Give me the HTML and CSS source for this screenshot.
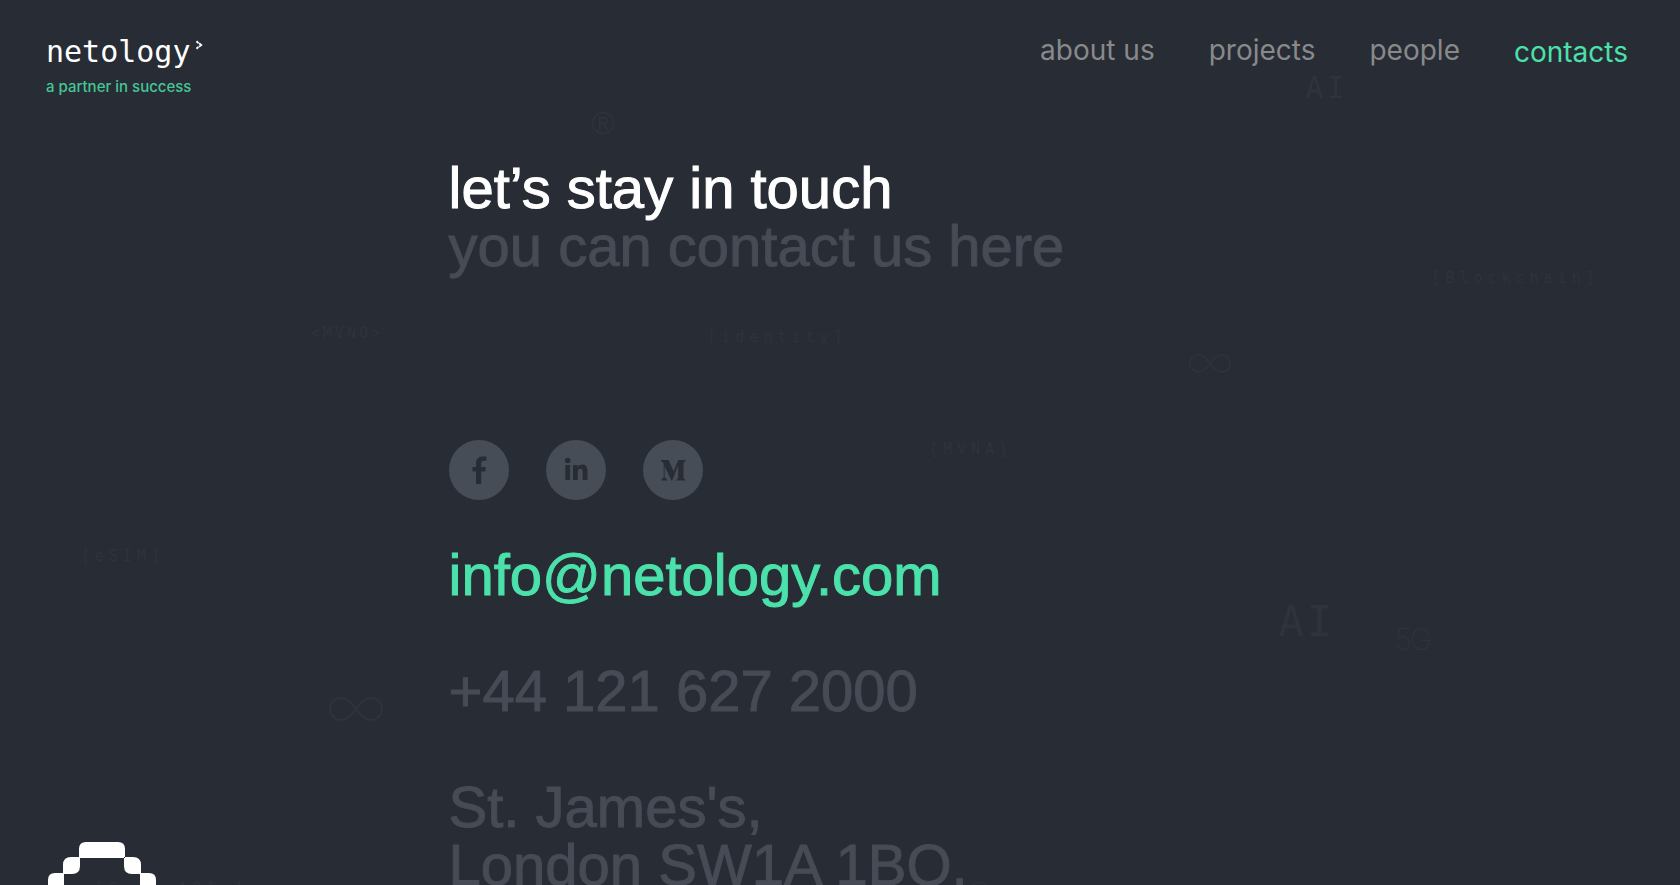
FILE: index.html
```html
<!DOCTYPE html>
<html lang="en">

<head>
    <meta charset="UTF-8">
    <meta name="viewport" content="width=device-width, initial-scale=1.0">
    <title>netology - contacts</title>
    <link rel="stylesheet" href="styles.css">
</head>

<body>

    <!-- floating background words -->
    <div class="words" aria-hidden="true">
        <span class="word reg">®</span>
        <span class="word ai-top">AI</span>
        <span class="word blockchain">[Blockchain]</span>
        <span class="word mvno">&lt;MVNO&gt;</span>
        <span class="word identity">[identity]</span>
        <span class="word mvna">{MVNA}</span>
        <span class="word esim">[eSIM]</span>
        <span class="word ai-bottom">AI</span>
        <span class="word five-g">5G</span>
        <span class="word apis">[Core APIs]</span>
        <span class="word reg-bottom">®</span>
        <svg class="word loop-small" viewBox="0 0 54 24"><path d="M27 12C22 5 18 1 12 1a11 11 0 0 0 0 22c6 0 10-4 15-11s9-11 15-11a11 11 0 0 1 0 22c-6 0-10-4-15-11z"/></svg>
        <svg class="word loop-big" viewBox="0 0 54 24"><path d="M27 12C22 5 18 1 12 1a11 11 0 0 0 0 22c6 0 10-4 15-11s9-11 15-11a11 11 0 0 1 0 22c-6 0-10-4-15-11z"/></svg>
    </div>

    <header class="header">
        <a class="logo" href="#">
            <span class="logo-name">netology<svg class="logo-arrow" viewBox="0 0 6 8"><path d="M1 1l1.500 1.500M1 7l1.500-1.500M3 2.500L4.800 4L3 5.500"/></svg></span>
            <span class="logo-text">a partner in success</span>
        </a>
        <nav class="menu">
            <a href="#">about us</a>
            <a href="#">projects</a>
            <a href="#">people</a>
            <a class="active" href="#">contacts</a>
        </nav>
    </header>

    <main class="contacts">
        <h1>let’s stay in touch<br><span>you can contact us here</span></h1>

        <div class="social">
            <a href="#" aria-label="Facebook">
                <svg viewBox="0 0 60 60"><path d="M27 44V31.500h-3.500V27H27v-3.500c0-4.500 2.500-7 6.500-7H37.500v4.300h-2.500c-2 0-2.800 1-2.800 2.700V27h4.800l-.7 4.500h-4.100V44z"/></svg>
            </a>
            <a href="#" aria-label="LinkedIn">
                <svg viewBox="0 0 60 60"><circle cx="21.700" cy="20.500" r="2.800"/><path d="M19.300 25h4.800v15h-4.800zM27 25h4.600v2c.9-1.500 2.500-2.400 4.600-2.400 4 0 5.300 2.600 5.300 6.600V40h-4.800v-7.800c0-2-.5-3.500-2.300-3.500-2 0-2.600 1.500-2.600 3.500V40H27z"/></svg>
            </a>
            <a href="#" aria-label="Medium">
                <svg viewBox="0 0 60 60"><path d="M18 20h7.600l5.100 11.600L35.300 20h7.200v1l-2 1.700v15.600l2 1.700v.6h-9.300V40l2-1.700V25.500l-6 15.100h-.8L21.600 26v11.300l2.900 2.700v.6H18V40l2.700-2.700V23.500L18 21z"/></svg>
            </a>
        </div>

        <a class="line mail" href="mailto:info@netology.com">info@netology.com</a>
        <a class="line" href="tel:+441216272000">+44 121 627 2000</a>
        <address class="line">St. James's,<br>London SW1A 1BQ,</address>
    </main>

    <button class="robot" aria-label="Open chat">
        <svg viewBox="0 0 108 108">
            <path id="edge" d="M31 16V7q0-7 7-7h32q7 0 7 7v9zM32 15v9q0 8-8 8h-9v-9q0-8 8-8zM76 15v9q0 8 8 8h9v-9q0-8-8-8z"/>
            <path d="M31 92v9q0 7 7 7h32q7 0 7-7v-9zM32 93v-9q0-8-8-8h-9v9q0 8 8 8zM76 93v-9q0-8 8-8h9v9q0 8-8 8z"/>
            <path d="M16 31H7q-7 0-7 7v32q0 7 7 7h9zM92 31h9q7 0 7 7v32q0 7-7 7h-9z"/>
        </svg>
    </button>

</body>

</html>
```

FILE: styles.css
```css
* {
    box-sizing: border-box;
}

body {
    margin: 0;
    position: relative;
    min-height: 100vh;
    overflow-x: hidden;
    background: #282c34;
    color: #464b55;
    font-family: "Liberation Sans", Arial, sans-serif;
}

a {
    color: inherit;
    text-decoration: none;
}

.header {
    display: flex;
    justify-content: space-between;
    align-items: flex-start;
    padding: 32px 52px 0 46px;
    height: 159px;
    font-family: Inter, sans-serif;
}

.logo {
    display: flex;
    flex-direction: column;
}

.logo-name {
    display: flex;
    color: #fff;
    font-family: "DejaVu Sans Mono", monospace;
    font-size: 30px;
    line-height: 40px;
}

.logo-arrow {
    width: 8px;
    height: 10px;
    margin: 8px 0 0 4px;
    fill: none;
    stroke: #fff;
    stroke-width: 1.5;
}

.logo-text {
    color: #45c698;
    font-size: 15px;
    font-weight: 500;
    line-height: 30px;
}

.menu {
    display: flex;
    gap: 54px;
    color: #88898b;
    font-size: 28px;
    line-height: 36px;
}

.menu .active {
    padding-top: 2px;
    color: #4be1ab;
}

.contacts {
    display: flex;
    flex-direction: column;
    align-items: flex-start;
    margin-left: 26.7%;
    padding-bottom: 80px;
}

h1,
.line {
    margin: 0;
    font-size: 58px;
    font-style: normal;
    font-weight: 400;
    line-height: 58px;
    -webkit-text-stroke: 1px;
}

h1 {
    color: #fff;
}

h1 span {
    color: #464b55;
}

.social {
    display: flex;
    gap: 37px;
    margin-top: 165px;
    margin-bottom: -12px;
}

.social a {
    width: 60px;
    height: 60px;
    border-radius: 50%;
    background: #474d57;
}

.social svg {
    display: block;
    fill: #282c34;
}

.line {
    margin-top: 58px;
}

.mail {
    color: #4be1ab;
}

/* background words */
.words {
    position: absolute;
    inset: 0;
    overflow: hidden;
    z-index: -1;
}

.word {
    position: absolute;
    color: #2f333b;
    font-family: "DejaVu Sans Mono", monospace;
    font-size: 15px;
    line-height: 20px;
    letter-spacing: 5px;
}

svg.word {
    fill: none;
    stroke: #2f333b;
    stroke-width: 2;
}

.reg,
.reg-bottom {
    font-family: "Liberation Sans", sans-serif;
    font-size: 32px;
    line-height: 32px;
    letter-spacing: 0;
}

.reg {
    left: 35.2%;
    top: 107px;
}

.reg-bottom {
    left: 57.600%;
    top: 877px;
}

.ai-top {
    left: 77.700%;
    top: 71px;
    font-size: 30px;
    line-height: 34px;
    letter-spacing: 3px;
}

.ai-bottom {
    left: 76.1%;
    top: 599px;
    font-size: 42px;
    line-height: 46px;
    letter-spacing: 3px;
}

.blockchain {
    left: 85.2%;
    top: 268px;
}

.mvno {
    left: 18.500%;
    top: 323px;
    letter-spacing: 3px;
}

.identity {
    left: 42.1%;
    top: 327px;
}

.mvna {
    left: 55.3%;
    top: 439px;
}

.esim {
    left: 4.800%;
    top: 546px;
}

.five-g {
    left: 83%;
    top: 624px;
    font-family: Inter, sans-serif;
    font-size: 30px;
    font-weight: 200;
    line-height: 30px;
    letter-spacing: -2px;
}

.apis {
    left: 5.600%;
    top: 879px;
}

.loop-small {
    left: 70.800%;
    top: 354px;
    width: 42px;
}

.loop-big {
    left: 19.600%;
    top: 697px;
    width: 54px;
}

/* chat robot, half hidden under the bottom edge */
.robot {
    position: fixed;
    left: 48px;
    bottom: -65px;
    width: 108px;
    height: 108px;
    padding: 0;
    border: 0;
    background: none;
    cursor: pointer;
}

.robot svg {
    display: block;
    fill: #fff;
}
```
